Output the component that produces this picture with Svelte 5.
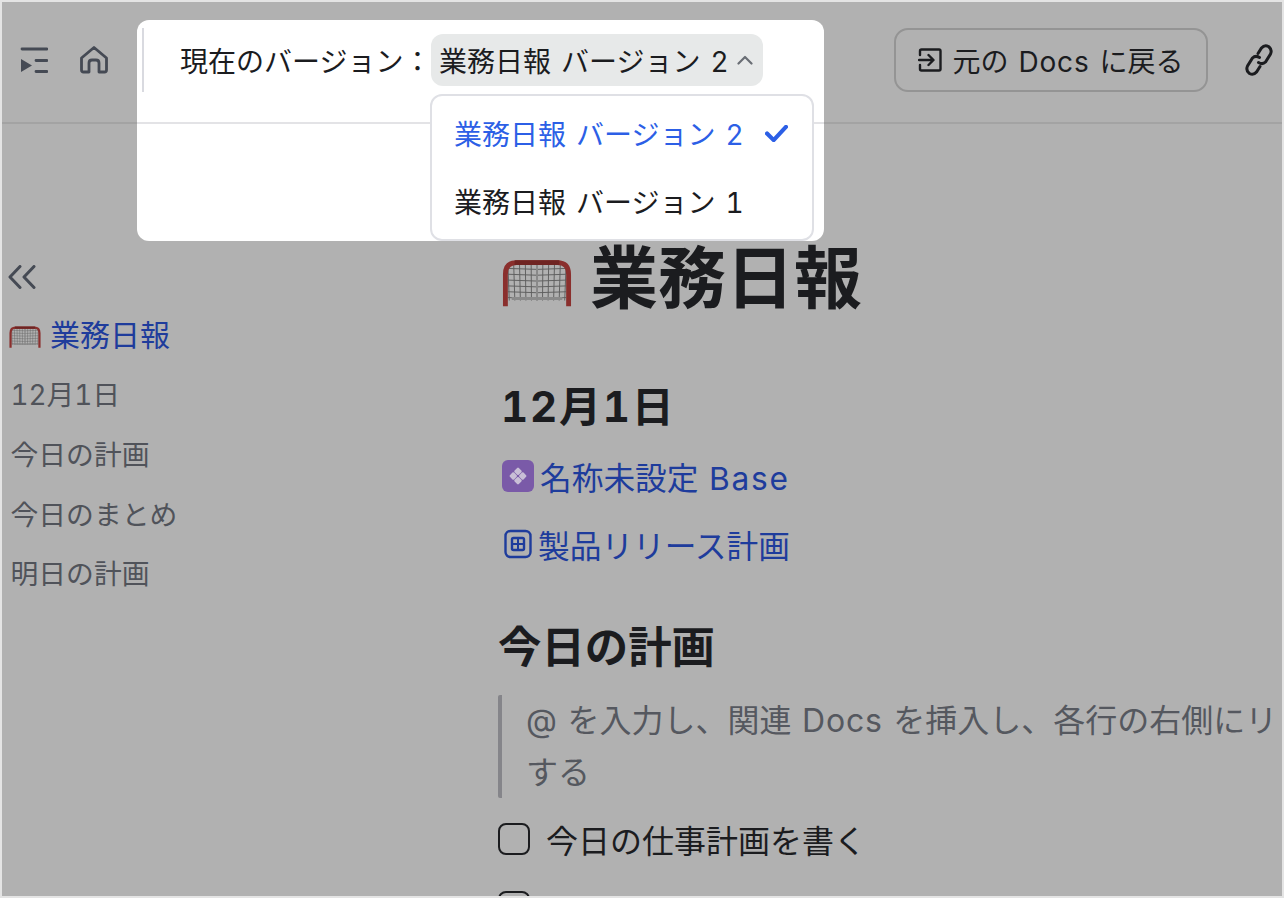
<script>
  const toc = ['12月1日', '今日の計画', '今日のまとめ', '明日の計画'];
  const netV = [-30, -24, -18, -12, -6, 0, 6, 12, 18, 24, 30];
  const netH = [11, 17, 23, 29, 35, 41];
</script>

{#snippet goal(cls)}
  <svg class={cls} viewBox="0 0 72 52" aria-hidden="true">
    <g stroke="#5f5f5f" stroke-width="1" fill="none">
      {#each netV as d}
        <path d="M{36 + d} 6 L{36 + d * 0.95} 44" />
      {/each}
      {#each netH as y}
        <path d="M6 {y} Q36 {y + 2} 66 {y}" />
      {/each}
      <path d="M10 42 H62" stroke-width="3" stroke="#8a8a8a" />
      <path d="M36 6 V44" stroke-width="2" stroke="#8a8a8a" />
    </g>
    <path d="M3.5 50 V17 Q3.5 5 15 5 H57 Q68.5 5 68.5 17 V50" fill="none" stroke="#8a2f2d" stroke-width="5" />
    <path d="M13 5 H59" stroke="#6f2422" stroke-width="5" />
  </svg>
{/snippet}

<div class="page">
  <header class="toolbar">
    <div class="tools-left">
      <svg class="icon" viewBox="0 0 28 28" aria-hidden="true">
        <path d="M2 3 H27" class="s" />
        <path d="M1 13 L12 19.5 L1 26 Z" fill="#454a54" />
        <path d="M16 14.5 H27 M16 25.5 H27" class="s" />
      </svg>
      <svg class="icon" viewBox="0 0 28 28" aria-hidden="true">
        <path d="M1.5 12 L14 1.5 L26.5 12 V24 Q26.5 26 24.5 26 H19 V17 Q19 14 16 14 H12 Q9 14 9 17 V26 H3.5 Q1.5 26 1.5 24 Z" class="s" />
      </svg>
    </div>
    <div class="tools-right">
      <button class="back">
        <svg viewBox="0 0 24 24" aria-hidden="true">
          <path d="M2 7 V3 Q2 1.5 3.5 1.5 H21 Q22.5 1.5 22.5 3 V21 Q22.5 22.5 21 22.5 H3.5 Q2 22.5 2 21 V17 M1 12 H15 M10.5 7 L15.5 12 L10.5 17" />
        </svg>
        <span>元の <b>Docs</b> に戻る</span>
      </button>
      <svg class="link" viewBox="0 0 28 32" aria-hidden="true">
        <path d="M13 9.5 L16.5 4 Q19.5 0.5 23.5 2.5 Q27.5 5.5 25.5 10 L20.5 18 Q17.5 21 13.5 18.5" />
        <path d="M15 22.5 L11.5 28 Q8.5 31.5 4.5 29.5 Q0.5 26.5 2.5 22 L7.5 14 Q10.5 11 14.5 13.5" />
      </svg>
    </div>
  </header>

  <div class="body">
    <nav class="side">
      <svg class="collapse" viewBox="0 0 28 24" aria-hidden="true">
        <path d="M12 1.5 L2 12 L12 22.5 M26 1.5 L16 12 L26 22.5" />
      </svg>
      <a class="current">{@render goal('goal-sm')}<span>業務日報</span></a>
      {#each toc as item}
        <a>{item}</a>
      {/each}
    </nav>

    <main class="doc">
      <h1>{@render goal('goal-lg')}<span>業務日報</span></h1>
      <h2>12月1日</h2>
      <p class="ref">
        <svg class="base" viewBox="0 0 32 32" aria-hidden="true">
          <rect width="32" height="32" rx="6" fill="#7a5aa8" />
          <g fill="#c9bfd6">
            <rect x="13" y="8.3" width="6" height="6" rx="1.2" transform="rotate(45 16 11.3)" />
            <rect x="13" y="17.7" width="6" height="6" rx="1.2" transform="rotate(45 16 20.7)" />
            <rect x="8.3" y="13" width="6" height="6" rx="1.2" transform="rotate(45 11.3 16)" />
            <rect x="17.7" y="13" width="6" height="6" rx="1.2" transform="rotate(45 20.7 16)" />
          </g>
        </svg>
        <span>名称未設定 <b class="wide">Base</b></span>
      </p>
      <p class="ref">
        <svg class="plan" viewBox="0 0 28 30" aria-hidden="true">
          <rect x="1.5" y="2" width="25" height="26" rx="5" fill="none" stroke="#1e3c9c" stroke-width="2.4" />
          <rect x="8" y="9" width="12" height="12" rx="1.5" fill="none" stroke="#1e3c9c" stroke-width="2.4" />
          <path d="M14 9 V21 M8 15 H20" stroke="#1e3c9c" stroke-width="2" />
        </svg>
        <span>製品リリース計画</span>
      </p>
      <h3>今日の計画</h3>
      <blockquote>@ を入力し、関連 <b>Docs</b> を挿入し、各行の右側にリ<br />する</blockquote>
      <div class="todo"><i></i><span>今日の仕事計画を書く</span></div>
      <div class="todo"><i></i><span></span></div>
    </main>
  </div>

  <div class="scrim-modal">
    <div class="rule"></div>
    <div class="current-row">
      <span>現在のバージョン：</span>
      <div class="select">
        <span>業務日報 バージョン 2</span>
        <svg viewBox="0 0 16 10" aria-hidden="true"><path d="M1.5 8.5 L8 2 L14.5 8.5" /></svg>
      </div>
    </div>
    <div class="divider"></div>
    <div class="menu">
      <div class="opt active">
        <span>業務日報 バージョン 2</span>
        <svg viewBox="0 0 24 18" aria-hidden="true"><path d="M2 9 L9 16 L22 2" /></svg>
      </div>
      <div class="opt"><span>業務日報 バージョン 1</span></div>
    </div>
  </div>
</div>

<style>
  :global(body) {
    margin: 0;
    background: #fff;
  }
  .page {
    position: relative;
    width: 1284px;
    height: 898px;
    box-sizing: border-box;
    border: 2px solid #e4e4e4;
    background: #b1b1b1;
    overflow: hidden;
    font-family: Inter, "Noto Sans CJK JP", sans-serif;
    font-variant-numeric: tabular-nums;
    color: #1b1c1f;
  }
  b {
    font-weight: inherit;
    letter-spacing: 0.8px;
  }
  b.wide {
    letter-spacing: 1.8px;
  }
  .toolbar {
    height: 122px;
    box-sizing: border-box;
    border-bottom: 2px solid #a3a3a3;
    display: flex;
    justify-content: space-between;
    align-items: flex-start;
    padding: 26px 9px 0 18px;
  }
  .tools-left {
    display: flex;
    gap: 32px;
    padding-top: 18px;
  }
  .icon {
    width: 28px;
    height: 28px;
  }
  .s {
    fill: none;
    stroke: #454a54;
    stroke-width: 2.8;
    stroke-linecap: round;
    stroke-linejoin: round;
  }
  .tools-right {
    display: flex;
    align-items: center;
    gap: 37px;
  }
  .back {
    width: 314px;
    height: 64px;
    box-sizing: border-box;
    border: 2px solid #949494;
    border-radius: 14px;
    background: transparent;
    font: inherit;
    font-size: 28px;
    word-spacing: 2.5px;
    color: #1b1c1f;
    display: flex;
    align-items: center;
    justify-content: center;
    gap: 10px;
    padding: 0;
  }
  .back svg {
    width: 24px;
    height: 24px;
  }
  .back path {
    fill: none;
    stroke: #1b1c1f;
    stroke-width: 2.4;
    stroke-linecap: round;
    stroke-linejoin: round;
  }
  .link {
    width: 28px;
    height: 32px;
  }
  .link path {
    fill: none;
    stroke: #1b1c1f;
    stroke-width: 3;
    stroke-linecap: round;
  }
  .body {
    display: grid;
    grid-template-columns: 496px 1fr;
  }
  .side {
    padding: 141px 0 0 6px;
    display: flex;
    flex-direction: column;
    align-items: flex-start;
  }
  .collapse {
    width: 28px;
    height: 24px;
    margin-bottom: 15px;
  }
  .collapse path {
    fill: none;
    stroke: #454a54;
    stroke-width: 3;
    stroke-linecap: round;
    stroke-linejoin: round;
  }
  .side a {
    font-size: 27.8px;
    line-height: 60px;
    height: 59.8px;
    color: #50535a;
    padding-left: 2.5px;
    display: flex;
    align-items: center;
    gap: 9px;
  }
  .side a.current {
    color: #1e3c9c;
    font-size: 30px;
    height: 61px;
    padding-left: 1px;
  }
  .goal-sm {
    width: 32px;
    height: 24px;
    margin-top: 4px;
  }
  .doc {
    min-width: 0;
    overflow: hidden;
    padding-top: 112px;
  }
  h1 {
    margin: 0 0 60px;
    font-size: 68px;
    line-height: 84px;
    font-weight: 700;
    display: flex;
    align-items: center;
    gap: 18px;
    padding-left: 4px;
  }
  .goal-lg {
    width: 70px;
    height: 52px;
    margin-top: 10px;
  }
  h2 {
    margin: 0 0 20px;
    font-size: 42px;
    line-height: 54px;
    font-weight: 700;
    padding-left: 3px;
    letter-spacing: 1.8px;
  }
  .ref {
    margin: 0 0 24px;
    height: 44px;
    display: flex;
    align-items: center;
    gap: 6px;
    padding-left: 4px;
    font-size: 31.7px;
    word-spacing: 2px;
    color: #1e3c9c;
    white-space: nowrap;
  }
  .base {
    width: 32px;
    height: 32px;
  }
  .plan {
    width: 28px;
    height: 30px;
    margin-right: 0;
    margin-left: 2px;
  }
  h3 {
    margin: 53px 0 20px;
    font-size: 43.4px;
    line-height: 56px;
    font-weight: 700;
  }
  blockquote {
    margin: 0 0 19px;
    border-left: 4px solid #85858a;
    border-radius: 2px;
    padding-left: 24px;
    font-size: 32px;
    word-spacing: 2px;
    line-height: 52px;
    color: #55585f;
    white-space: nowrap;
    height: 103px;
  }
  .todo {
    display: flex;
    align-items: center;
    gap: 16px;
    height: 44px;
    margin-bottom: 24px;
    font-size: 32px;
  }
  .todo i {
    width: 32px;
    height: 32px;
    box-sizing: border-box;
    border: 2px solid #1b1c1f;
    border-radius: 8px;
  }
  .scrim-modal {
    position: absolute;
    left: 135px;
    top: 18px;
    width: 687px;
    height: 221px;
    background: #fff;
    border-radius: 12px;
    font-size: 28px;
    word-spacing: 2.5px;
    color: #1b1c1f;
  }
  .rule {
    position: absolute;
    left: 5px;
    top: 8px;
    width: 2px;
    height: 64px;
    background: #d9dae0;
  }
  .current-row {
    display: flex;
    align-items: center;
    padding: 14px 0 0 43px;
  }
  .current-row > span {
    width: 251px;
    white-space: nowrap;
  }
  .select {
    height: 52px;
    box-sizing: border-box;
    background: #e7e9e9;
    border-radius: 12px;
    display: flex;
    align-items: center;
    gap: 8px;
    padding: 0 10px 0 8px;
    white-space: nowrap;
  }
  .select svg {
    width: 16px;
    height: 10px;
  }
  .select path {
    fill: none;
    stroke: #6a6e75;
    stroke-width: 2.2;
    stroke-linecap: round;
    stroke-linejoin: round;
  }
  .divider {
    height: 2px;
    margin-top: 36px;
    background: #e3e3e6;
  }
  .menu {
    position: absolute;
    left: 293px;
    top: 74px;
    width: 384px;
    height: 147px;
    box-sizing: border-box;
    background: #fff;
    border: 2px solid #dfe0e5;
    border-radius: 12px;
    padding: 3px 0;
  }
  .opt {
    height: 68px;
    display: flex;
    align-items: center;
    justify-content: space-between;
    padding: 0 24px 0 22px;
    white-space: nowrap;
  }
  .opt.active {
    color: #2c5fe6;
  }
  .opt svg {
    width: 23px;
    height: 17px;
  }
  .opt path {
    fill: none;
    stroke: #2c5fe6;
    stroke-width: 4.4;
    stroke-linecap: round;
    stroke-linejoin: round;
  }
</style>
